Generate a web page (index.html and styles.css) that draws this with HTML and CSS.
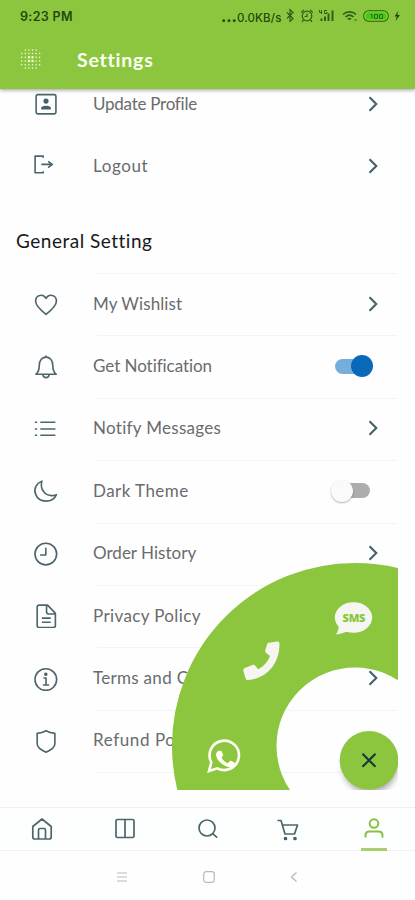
FILE: index.html
```html
<!DOCTYPE html>
<html lang="en">
<head>
<meta charset="utf-8">
<title>Settings</title>
<link rel="stylesheet" href="styles.css">
</head>
<body>
<svg class="defs" width="0" height="0"><defs>
<symbol id="chev" viewBox="0 0 12 18"><path d="M2.500 2.200 9.300 9l-6.800 6.800" fill="none" stroke="#456068" stroke-width="2.100"/></symbol>
</defs></svg>
<div class="phone">
<header class="header">
  <div class="status">
    <span class="time">9:23 PM</span>
    <span class="speed"><b>...</b>0.0KB/s</span>
    <svg class="status-icons" width="118" height="18" viewBox="0 0 118 18" fill="none" stroke="#315b18" stroke-width="1.200">
      <path d="m1 5.500 6 6-3 2.800V2.700l3 2.800-6 6"/>
      <g transform="translate(3.500 0)"><circle cx="17.500" cy="9" r="4.800"/><path d="M17.500 6.500v3h-2.400M11.800 5.500l2.500-2.500M23.200 5.500 20.700 3M14 13l-1.500 1.800M21 13l1.500 1.800"/></g>
      <g transform="translate(4 0)"><path stroke-width="1.900" d="M31.500 14v-2.500M35 14v-4.500M38.500 14V6.500M42.500 14V3.500"/><path stroke-width="1" d="M29.500 3v2.500h2M31.500 3v4M37 3.500h-2.500v3H37V5"/></g>
      <g transform="translate(4.500 0)"><path d="M52.500 7.500c3.500-3.500 9.500-3.500 13 0M55 10c2.500-2.400 5.500-2.400 8 0M57.500 12.400c1-1 2-1 3 0" stroke-width="1.600"/><path d="M64 13h2"/></g>
      <g transform="translate(4.500 0)"><rect x="73" y="3.700" width="25" height="10.600" rx="5.300" stroke="#397c13"/><rect x="75" y="5.500" width="21" height="7" rx="3.500" fill="#46cc16" stroke="none"/>
      <path d="M80 7.500h1.500v4M84 7.500h3v4h-3zM89 7.500h3v4h-3z" stroke-width=".9"/>
      <path d="m108 3.500-4 6h2.300L105 14l4.500-6h-2.700z" fill="#24480e" stroke="none"/></g>
    </svg>
  </div>
  <div class="appbar">
    <svg class="dots" width="20" height="20" viewBox="0 0 20 20" stroke="#f4ffe2" stroke-linecap="round" fill="none">
      <path stroke-width="1.500" stroke-dasharray="0 3.600" d="M4.300 1h12M.7 4.500h18.500M.7 8.200h18.500M.7 12h18.500M.7 15.700h18.500M4.300 19h12"/>
      <path stroke-width="2.400" stroke-dasharray="0 3.600" d="M7.900 8.200h4M7.900 12h4"/>
    </svg>
    <h1>Settings</h1>
  </div>
</header>
<main class="content">
  <section class="account">
    <div class="row"><svg class="icon" viewBox="0 0 24 24"><rect x="3" y="2.500" width="19" height="18.500" rx="1.500"/><circle cx="12.500" cy="8.700" r="1.700" class="solid"/><path class="solid" d="M8.500 16c0-2.600 8-2.600 8 0z"/></svg><span class="label l-update">Update Profile</span><svg class="chev"><use href="#chev"/></svg></div>
    <div class="row"><svg class="icon" viewBox="0 0 24 24"><path d="M9.800 3.500V2H2v16h7.800v-1.500M8 10h11M14.500 7l4 3-4 3"/></svg><span class="label l-logout">Logout</span><svg class="chev"><use href="#chev"/></svg></div>
  </section>
  <h2><span>General Setting</span></h2>
  <section class="general">
    <div class="row"><svg class="icon" viewBox="0 0 24 24"><path d="M12.500 22.500C8 19 2.500 14.500 2.500 9.700 2.500 3.500 10 2.200 12.500 7.200c2.500-5 10-3.700 10 2.500 0 4.800-5.500 9.300-10 12.800z"/></svg><span class="label l-wish">My Wishlist</span><svg class="chev"><use href="#chev"/></svg></div>
    <div class="row"><svg class="icon" viewBox="0 0 24 24"><path d="M12.500 2.700V1.500M2.700 19.500c2-1.500 3.300-4 3.300-8.500C6 6 9 3 12.500 3S19 6 19 11c0 4.500 1.300 7 3.300 8.500zM9.500 20c.5 3.500 5.500 3.500 6 0"/></svg><span class="label l-notif">Get Notification</span><span class="switch on"><i></i></span></div>
    <div class="row"><svg class="icon" viewBox="0 0 24 24"><path d="M7 6h14.500M7 12.500h14.500M7 18.500h14.500M1.800 6H4M1.800 12.500H4M1.800 18.500H4"/></svg><span class="label l-msg">Notify Messages</span><svg class="chev"><use href="#chev"/></svg></div>
    <div class="row"><svg class="icon" viewBox="0 0 24 24"><path d="M8.500 3C3.500 5 .3 10.500 2.500 15.500c3.300 9 16.500 8.800 20 .5-4.500 1.500-9 1-12-2.500-2.500-3-3-6.800-2-10.500z"/></svg><span class="label l-dark">Dark Theme</span><span class="switch off"><i></i></span></div>
    <div class="row"><svg class="icon" viewBox="0 0 24 24"><circle cx="12.300" cy="12.500" r="10.400"/><path d="M12.300 6.500v7H6.800"/></svg><span class="label l-order">Order History</span><svg class="chev"><use href="#chev"/></svg></div>
    <div class="row"><svg class="icon" viewBox="0 0 24 24"><path d="M6 2h8l7.500 8v11.500q0 2-2 2H6q-2 0-2-2V4q0-2 2-2zM13 2v6.500q0 2 2 2h6.500M8.500 14.500h8.500M8.500 18.500h8.500"/></svg><span class="label l-privacy">Privacy Policy</span></div>
    <div class="row"><svg class="icon" viewBox="0 0 24 24"><circle cx="12.300" cy="13" r="10.400"/><path d="M10 11.500h2.500v6.700M9.500 18.200h6"/><circle cx="12.300" cy="8" r=".9" class="solid"/></svg><span class="label l-terms">Terms and Conditions</span><svg class="chev"><use href="#chev"/></svg></div>
    <div class="row"><svg class="icon" viewBox="0 0 24 24"><path d="M12.500 2.700c2.800 1.700 5.500 2.300 8.500 2.500v10c0 4-3.500 6-8.500 8-5-2-8.500-4-8.500-8v-10c3-.2 5.700-.8 8.500-2.500z"/></svg><span class="label l-refund">Refund Policy</span></div>
    <div class="row last"></div>
  </section>
</main>
<nav class="tabs">
  <a><svg width="24" height="24" viewBox="0 0 24 24"><path d="M2.800 9.500 12 2l9.200 7.500V20q0 2-2 2H4.800q-2 0-2-2zM8.500 22V13q0-1.500 1.500-1.500h4q1.500 0 1.500 1.500v9"/></svg></a>
  <a><svg width="24" height="24" viewBox="0 0 24 24"><rect x="3" y="2.500" width="18" height="18" rx="1.500"/><path d="M12 2.500v18"/></svg></a>
  <a><svg width="24" height="24" viewBox="0 0 24 24"><circle cx="11" cy="11" r="8"/><path d="m16.700 16.700 4.500 4"/></svg></a>
  <a class="cart"><svg width="24" height="24" viewBox="0 0 24 24"><path d="M1.500 3.500H5L9 17h9.500l3-9H6.500"/><circle cx="9.500" cy="21.500" r="1" class="solid"/><circle cx="19" cy="21.500" r="1" class="solid"/></svg></a>
  <a class="active"><svg width="24" height="24" viewBox="0 0 24 24"><circle cx="12" cy="6.500" r="4.300"/><path d="M3.500 20.500v-2q0-4 4-4h9q4 0 4 4v2"/></svg></a>
</nav>
<footer class="system">
  <svg width="12" height="12" viewBox="0 0 12 12"><path d="M1 2h10M1 6h10M1 10h10"/></svg>
  <svg width="12" height="12" viewBox="0 0 12 12"><rect x=".7" y=".7" width="10.600" height="10.600" rx="2.500"/></svg>
  <svg width="12" height="12" viewBox="0 0 12 12"><path d="M7.500 1.500 2.500 6l5 4.500"/></svg>
</footer>
<div class="radial">
  <svg width="227" height="228" viewBox="0 0 227 228">
    <defs><filter id="sh" x="-30%" y="-30%" width="160%" height="160%"><feGaussianBlur stdDeviation="3"/></filter></defs>
    <circle cx="183" cy="184" r="130.750" fill="none" stroke="#8cc63e" stroke-width="104.500"/>
    <g fill="#f5f6f2">
      <ellipse cx="181.500" cy="55.500" rx="18.700" ry="15.300"/><path d="M167 62c0 4-1 7-3 10.500 5-.5 9-2 12-4z"/>
      <path transform="translate(-1.500 -.5)" d="M98.500 81.200 106.500 80c1.500-.2 2.500.5 2.500 2 0 22-14 35-31.500 36.500-1.500.1-2.300-.6-2.600-2l-2-7c-.4-1.400.2-2.400 1.500-3l7.500-2.900c1.200-.5 2.200-.2 3 .8l2.800 3.300c5.700-3 9.500-7.300 11.800-13.200l-3.800-3c-1-.8-1.300-1.800-.9-3l2-6.200c.3-.7.800-1 1.700-1.100z"/>
    </g>
    <text x="170.500" y="59.800" class="sms">SMS</text>
    <g transform="translate(-1.500 .5)"><path fill="none" stroke="#fffff4" stroke-width="2.600" d="m38.500 208.500 2.300-8.700a14.700 14.700 0 1 1 6 6z"/>
    <path fill="#fffff4" transform="translate(7.500 28) scale(.86)" d="M47.500 186.300h2.200c.7 0 1 .3 1.300 1l1.400 3.500c.2.600.1 1-.3 1.500l-1.600 1.900c1.800 3.300 4.200 5.500 7.500 6.700l2.200-2.600c.4-.5.900-.6 1.500-.3l3.500 1.700c.7.300.9.700.8 1.400-.3 3.200-3.500 5-6.500 4.400-7.500-1.500-14.500-8-15.300-14-.3-2.300 1.300-4.500 3.300-5.200z"/></g>
    <ellipse cx="198" cy="205" rx="27" ry="26" fill="#555" opacity=".5" filter="url(#sh)"/>
    <circle cx="197" cy="198.300" r="29.300" fill="#8cc63e"/>
    <path d="m190.500 191.800 13 13m0-13-13 13" stroke="#17383a" stroke-width="2.100"/>
  </svg>
</div>
</div>
</body>
</html>
```
FILE: styles.css
```css
* { box-sizing: border-box; }
body { margin: 0; background: #fff; font-family: Lato, "Open Sans", sans-serif; font-variant-ligatures: none; }
.defs { position: absolute; }
.phone { position: relative; width: 415px; height: 900px; overflow: hidden; display: flex; flex-direction: column; background: #fefefe; }
.header { height: 88.500px; flex: none; background: #8cc63e; box-shadow: 0 1px 4px rgba(0,0,0,.4); z-index: 2; }
.status { display: flex; align-items: center; height: 32px; padding-left: 20px; color: #24480e; font-family: Inter, sans-serif; }
.time { font-size: 12.500px; font-weight: 600; width: 201px; letter-spacing: .35px; }
.speed { font-size: 11.500px; font-weight: 500; width: 65px; white-space: nowrap; letter-spacing: .15px; }
.speed b { font-size: 15px; font-weight: 800; letter-spacing: 0; }
.status-icons { flex: none; }
.appbar { display: flex; align-items: center; height: 56.500px; padding: 0 0 2px 21px; }
.appbar h1 { margin: 0 0 0 36px; font: 700 19.500px Lato, sans-serif; color: #fbfff3; letter-spacing: .78px; }
.content { flex: 1; min-height: 0; overflow: hidden; }
.account { margin-top: -15px; }
.row { display: flex; align-items: center; height: 62.400px; position: relative; padding: 0 35px 0 33px; }
.account .row { height: 61.750px; }
.general .row::before { content: ""; position: absolute; left: 97px; right: 18px; top: 0; height: 1px; background: #f3f4f4; }
.icon { width: 25px; height: 25px; flex: none; fill: none; stroke: #4c656c; stroke-width: 1.550; stroke-linejoin: round; }
.general .icon { margin-top: -1px; }
.solid { fill: currentColor; stroke: currentColor; color: #45606a; }
.label { margin-left: 35px; font-size: 17px; font-weight: 400; color: #696b6d; white-space: nowrap; line-height: 24px; }
.l-update { letter-spacing: -.25px; }
.l-logout { letter-spacing: .6px; }
.l-wish { letter-spacing: .1px; }
.l-notif { letter-spacing: -.05px; }
.l-msg { letter-spacing: .3px; }
.l-dark { letter-spacing: .45px; }
.l-order { letter-spacing: .02px; }
.l-privacy { letter-spacing: .38px; }
.l-terms { letter-spacing: .3px; }
.l-refund { letter-spacing: .6px; }
.general .label { margin-top: -1px; }
.chev { width: 12px; height: 18px; margin-left: auto; margin-right: 1px; flex: none; }
.general .chev { margin-top: -1px; }
h2 { margin: 0; height: 76px; padding: 30px 0 0 16px; font: 400 19px/28px Lato, sans-serif; color: #17191b; letter-spacing: .5px; font-variant-ligatures: none; }
.switch { width: 38px; height: 22px; margin-left: auto; margin-right: 7px; margin-top: -1px; position: relative; display: flex; align-items: center; }
.switch::before { content: ""; width: 35px; height: 15px; border-radius: 8px; background: #75aedb; }
.switch i { position: absolute; right: 0; top: 0; width: 22px; height: 22px; border-radius: 50%; background: #0869b9; }
.off { margin-right: 10px; width: 39px; }
.off::before { margin-left: 6px; background: #adadad; width: 33px; }
.off i { right: auto; left: 0; background: #fafafa; box-shadow: 0 1px 2px rgba(0,0,0,.3); }
.tabs { flex: none; height: 43.500px; display: grid; grid-template-columns: repeat(5, 83px); border-top: 1px solid #f0f0f0; border-bottom: 1px solid #f0f2f0; background: #fdfefe; }
.tabs a { display: flex; align-items: center; justify-content: center; position: relative; }
.tabs svg { fill: none; stroke: #4c656a; stroke-width: 1.700; stroke-linejoin: round; }
.tabs .cart { padding-right: 6px; }
.tabs .active svg { stroke: #8cc13e; stroke-width: 2; }
.active::after { content: ""; position: absolute; left: 29px; bottom: -1px; width: 26px; height: 3px; background: #a9cf70; }
.system { flex: none; height: 49.500px; padding: 3px 0 0 116px; display: flex; align-items: center; gap: 74.500px; }
.system svg { fill: none; stroke: #b8b8b8; stroke-width: 1.200; }
.radial { position: absolute; left: 172px; top: 562px; width: 226px; height: 227.500px; overflow: hidden; z-index: 3; }
.radial svg { display: block; }
.sms { font: 800 11px "Open Sans", sans-serif; fill: #8cc63e; letter-spacing: -.2px; }
```
